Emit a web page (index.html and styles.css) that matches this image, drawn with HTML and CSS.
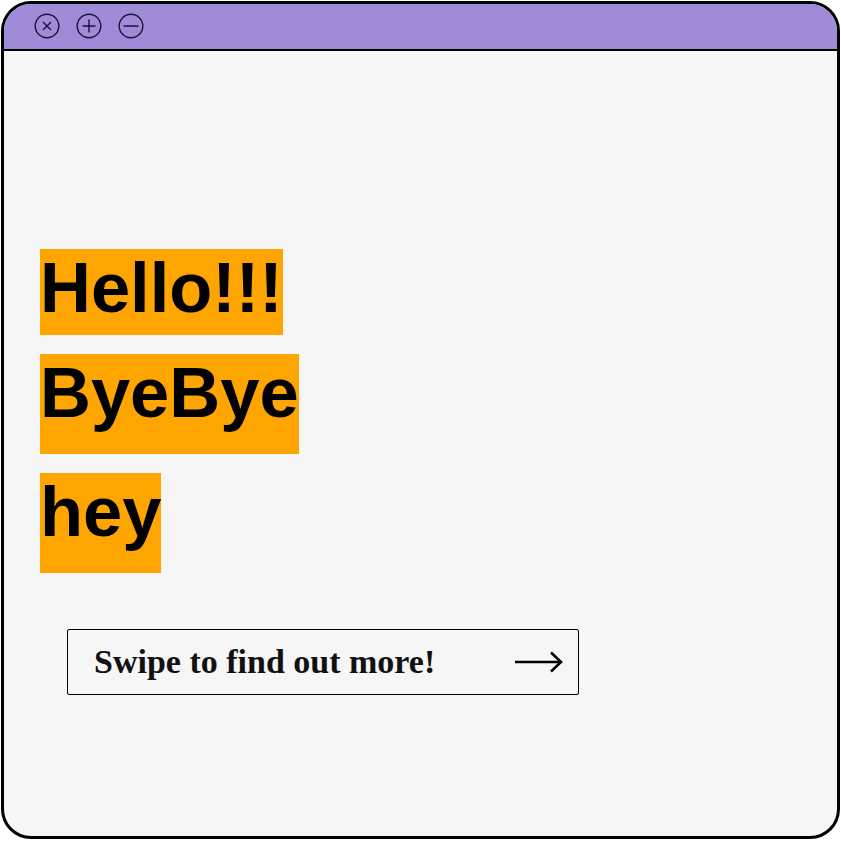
FILE: index.html
```html
<!DOCTYPE html>
<html>
<head>
<meta charset="utf-8">
<link rel="stylesheet" href="styles.css">
</head>
<body>
<div class="window">
  <div class="titlebar">
    <svg class="ctl" viewBox="0 0 26 26" width="26" height="26"><circle cx="13" cy="13" r="11.8" fill="none" stroke="#1b1236" stroke-width="1.4"/><path d="M9 9 L17 17 M17 9 L9 17" stroke="#1b1236" stroke-width="1.4" fill="none"/></svg>
    <svg class="ctl" viewBox="0 0 26 26" width="26" height="26"><circle cx="13" cy="13" r="11.8" fill="none" stroke="#1b1236" stroke-width="1.4"/><path d="M13 6.5 V19.5 M6.5 13 H19.5" stroke="#1b1236" stroke-width="1.4" fill="none"/></svg>
    <svg class="ctl" viewBox="0 0 26 26" width="26" height="26"><circle cx="13" cy="13" r="11.8" fill="none" stroke="#1b1236" stroke-width="1.4"/><path d="M5.5 13 H20.5" stroke="#1b1236" stroke-width="1.4" fill="none"/></svg>
  </div>
  <div class="content">
    <div class="words">
      <span class="word word-first">Hello!!!</span>
      <span class="word">ByeBye</span>
      <span class="word">hey</span>
    </div>
    <div class="swipe">
      <span class="swipe-text">Swipe to find out more!</span>
      <svg class="arrow" viewBox="0 0 50 24" width="50" height="24"><path d="M1 12 H47 M37 2.5 L47 12 L37 21.5" stroke="#000" stroke-width="2.6" fill="none" stroke-linecap="butt" stroke-linejoin="miter"/></svg>
    </div>
  </div>
</div>
</body>
</html>
```

FILE: styles.css
```css
html, body {
  margin: 0;
  padding: 0;
  background: #ffffff;
}
body {
  padding: 1px 0 0 1px;
}
.window {
  box-sizing: border-box;
  width: 839px;
  height: 838px;
  border: 3px solid #000;
  border-radius: 30px;
  overflow: hidden;
  background: #f5f6f5;
  display: flex;
  flex-direction: column;
}
.titlebar {
  height: 45px;
  background: #9f8bd7;
  border-bottom: 2px solid #000;
  display: flex;
  align-items: center;
  gap: 16px;
  padding-left: 30px;
  flex-shrink: 0;
}
.ctl {
  display: block;
  margin-top: -1px;
}
.content {
  padding: 198px 0 0 36px;
  display: flex;
  flex-direction: column;
}
.words {
  display: flex;
  flex-direction: column;
  align-items: flex-start;
  gap: 19px;
}
.word {
  display: block;
  background: #ffa500;
  color: #000;
  font-family: "Liberation Sans", Arial, sans-serif;
  font-weight: 700;
  font-size: 70.5px;
  line-height: 78px;
  padding-bottom: 22px;
}
.word-first {
  padding-bottom: 8px;
}
.swipe {
  margin: 56px 0 0 27px;
  box-sizing: border-box;
  width: 512px;
  height: 66px;
  border: 1px solid #000;
  border-radius: 2px;
  display: flex;
  align-items: center;
  justify-content: space-between;
  padding: 0 14px 0 26px;
}
.swipe-text {
  font-family: "Liberation Serif", "Times New Roman", serif;
  font-weight: 700;
  font-size: 34px;
  color: #111;
}
.arrow {
  display: block;
}
```
